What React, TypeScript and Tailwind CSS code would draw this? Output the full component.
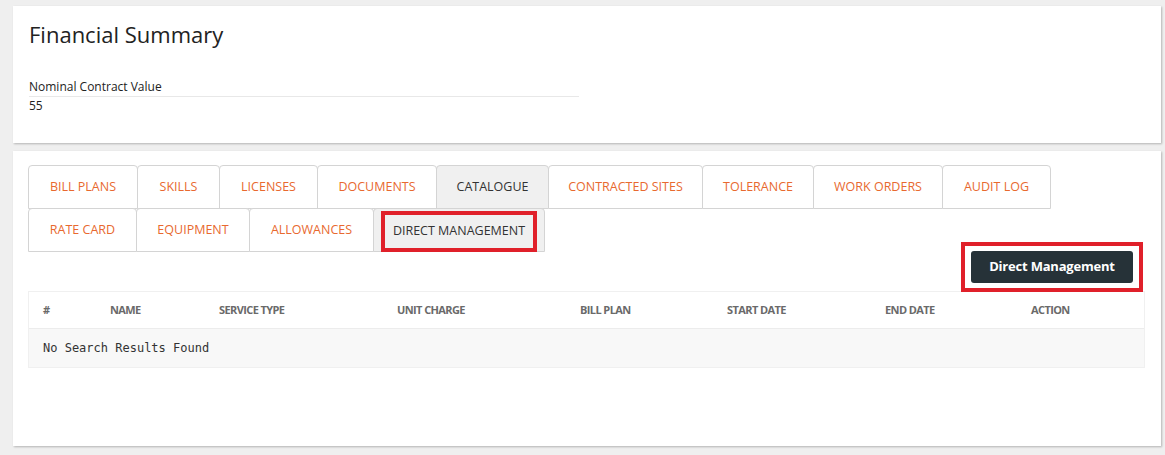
const topTabs = [
  { label: 'BILL PLANS', w: 'w-[110px]' },
  { label: 'SKILLS', w: 'w-[83px]' },
  { label: 'LICENSES', w: 'w-[99px]' },
  { label: 'DOCUMENTS', w: 'w-[120px]' },
  { label: 'CATALOGUE', w: 'w-[113px]', active: true },
  { label: 'CONTRACTED SITES', w: 'w-[155px]' },
  { label: 'TOLERANCE', w: 'w-[112px]' },
  { label: 'WORK ORDERS', w: 'w-[130px]' },
  { label: 'AUDIT LOG', w: 'w-[109px]' },
];

const bottomTabs = [
  { label: 'RATE CARD', w: 'w-[109px]' },
  { label: 'EQUIPMENT', w: 'w-[114px]' },
  { label: 'ALLOWANCES', w: 'w-[125px]' },
];

const columns = [
  { label: '#', w: 'w-[67px]' },
  { label: 'NAME', w: 'w-[109px]' },
  { label: 'SERVICE TYPE', w: 'w-[178px]' },
  { label: 'UNIT CHARGE', w: 'w-[183px]' },
  { label: 'BILL PLAN', w: 'w-[147px]' },
  { label: 'START DATE', w: 'w-[158px]' },
  { label: 'END DATE', w: 'w-[146px]' },
  { label: 'ACTION', w: 'w-[100px]' },
];

const Tab = ({ label, w, active }: { label: string; w: string; active?: boolean }) => (
  <div
    className={`${w} h-[44px] -mr-px flex items-center justify-center border border-[#d4d4d4] rounded-t-[4px] text-[12.5px] ${
      active ? 'bg-[#f0f0f0] text-[#333]' : 'bg-white text-[#e8692f]'
    }`}
  >
    {label}
  </div>
);

const App = () => {
  return (
    <div
      className="w-[1165px] h-[455px] bg-[#efefef] pt-[6px] pl-[13px] pr-[4px] overflow-hidden"
      style={{ fontFamily: '"Open Sans", sans-serif' }}
    >
      <div className="bg-white h-[137px] shadow-[1px_1px_2px_rgba(0,0,0,0.25)] pl-[16px] pt-[13px]">
        <h1 className="text-[22px] leading-[30px] text-[#222]">Financial Summary</h1>
        <div className="mt-[29px] w-[550px] text-[12px] text-[#222]">
          <div className="leading-[17px] border-b border-[#e8e8e8] pb-[1px]">Nominal Contract Value</div>
          <div className="leading-[18px]">55</div>
        </div>
      </div>

      <div className="bg-white h-[295px] mt-[8px] shadow-[1px_1px_2px_rgba(0,0,0,0.25)] pl-[15px] pr-[15px] pt-[14px]">
        <div className="flex">
          {topTabs.map((t) => (
            <Tab key={t.label} {...t} />
          ))}
        </div>
        <div className="flex -mt-px">
          {bottomTabs.map((t) => (
            <Tab key={t.label} {...t} />
          ))}
          <div className="w-[172px] h-[44px] flex items-center justify-center border border-[#d4d4d4] rounded-t-[4px] bg-[#f0f0f0] px-[7px]">
            <div className="w-full h-[41px] mt-[2px] border-4 border-[#e0202a] flex items-center justify-center text-[12.5px] text-[#333]">
              DIRECT MANAGEMENT
            </div>
          </div>
        </div>

        <div className="flex justify-end -mt-[10px] pr-[3px]">
          <div className="border-4 border-[#e0202a] px-[6px] py-[5px]">
            <button className="h-[32px] w-[162px] rounded-[3px] bg-[#263238] text-white text-[13px] font-bold tracking-[-0.2px]">
              Direct Management
            </button>
          </div>
        </div>

        <div className="w-[1117px] border border-[#f0f0f0] -mt-px">
          <div className="flex h-[36px] items-center pl-[14px] text-[11px] font-bold text-[#6a6a6a] tracking-[-0.6px] bg-white">
            {columns.map((c) => (
              <div key={c.label} className={c.w}>
                {c.label}
              </div>
            ))}
          </div>
          <div
            className="h-[39px] bg-[#f8f8f8] border-t border-[#ececec] flex items-center pl-[14px] text-[12px] text-[#333]"
            style={{ fontFamily: '"DejaVu Sans Mono", monospace' }}
          >
            No Search Results Found
          </div>
        </div>
      </div>
    </div>
  );
};

export default App;
